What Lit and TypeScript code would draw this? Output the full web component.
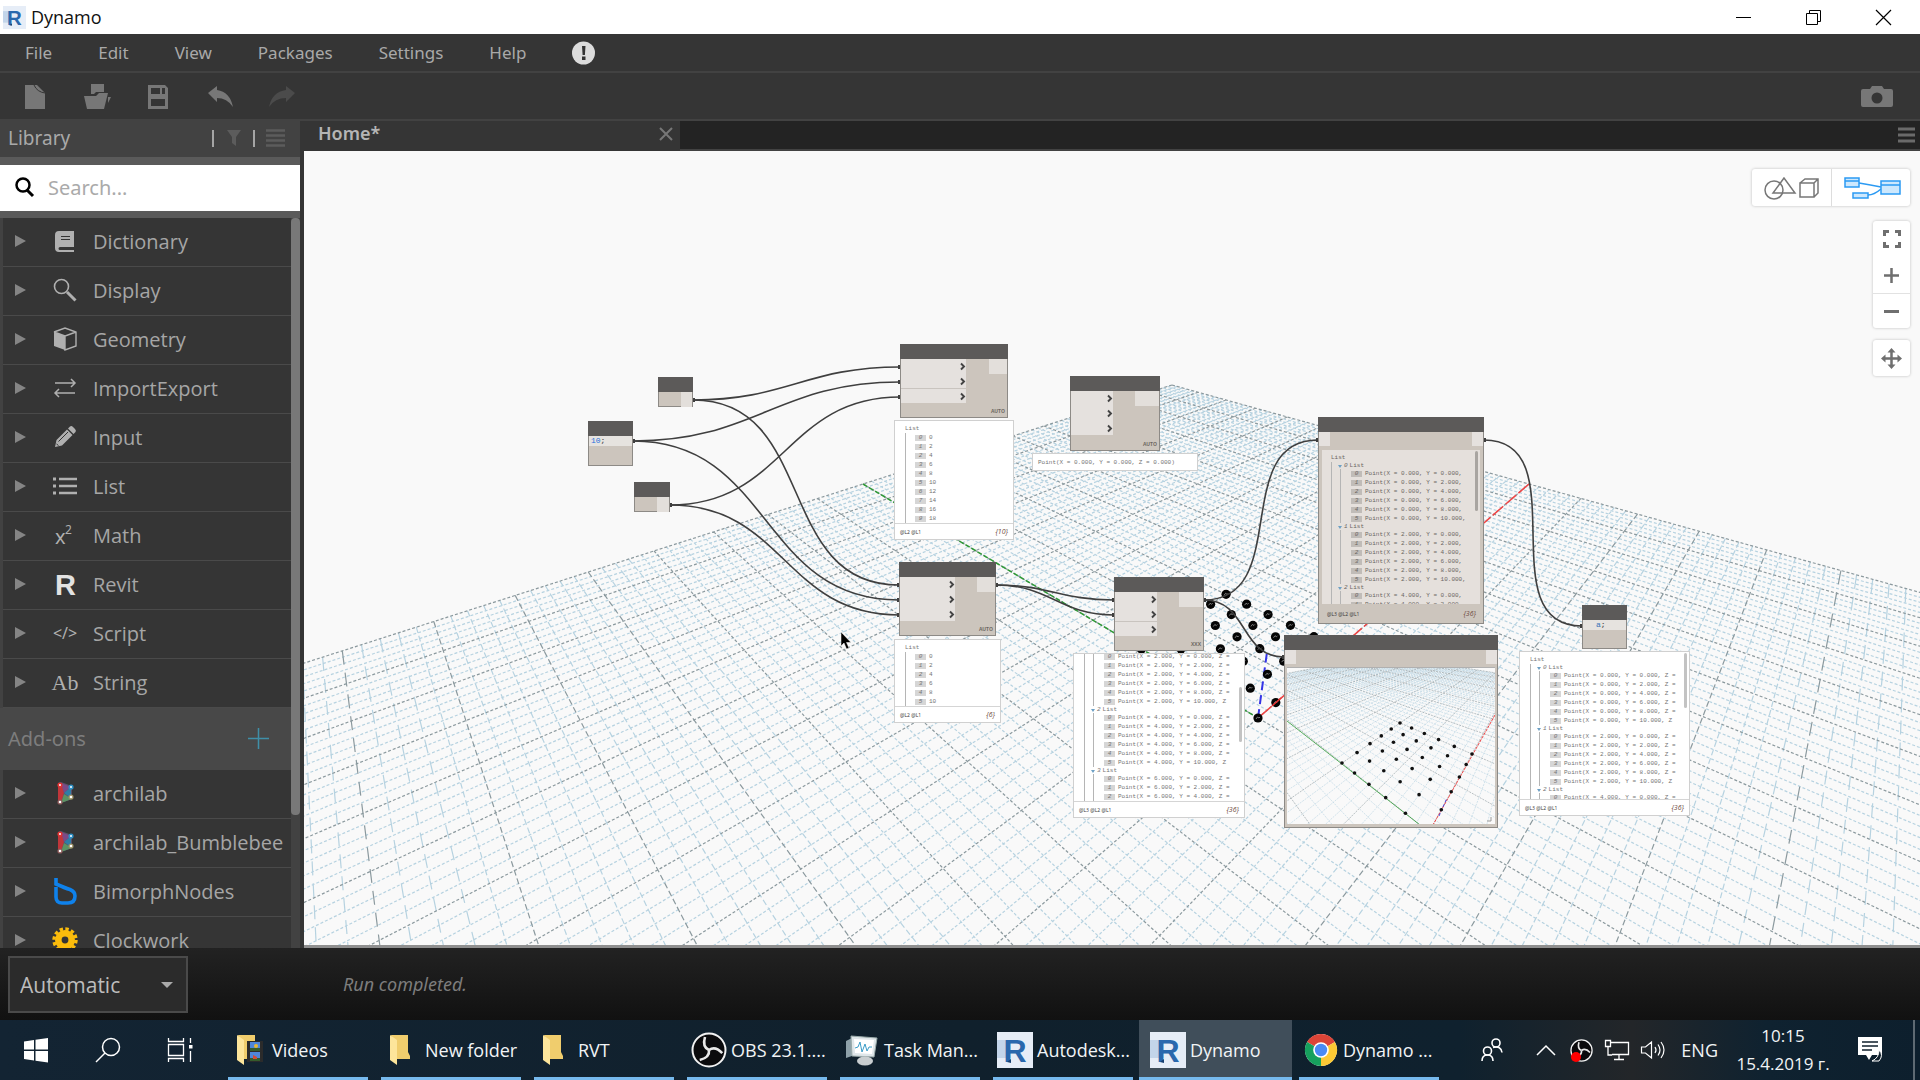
import { LitElement, html, svg, css, nothing } from "lit";
import { customElement } from "lit/decorators.js";
import { classMap } from "lit/directives/class-map.js";

type Pt = [number, number];

/** Perspective map of the unit square (origin, +X, +Y, both) to four screen points. */
function perspective(o: Pt, px: Pt, py: Pt, pxy: Pt) {
  const dx1 = px[0] - pxy[0], dx2 = py[0] - pxy[0], sx = o[0] - px[0] + pxy[0] - py[0];
  const dy1 = px[1] - pxy[1], dy2 = py[1] - pxy[1], sy = o[1] - px[1] + pxy[1] - py[1];
  const det = dx1 * dy2 - dx2 * dy1;
  const g = (sx * dy2 - dx2 * sy) / det;
  const h = (dx1 * sy - sx * dy1) / det;
  const a = px[0] - o[0] + g * px[0], b = py[0] - o[0] + h * py[0];
  const d = px[1] - o[1] + g * px[1], e = py[1] - o[1] + h * py[1];
  const w = (u: number, v: number) => g * u + h * v + 1;
  const at = (u: number, v: number): Pt => [
    (a * u + b * v + o[0]) / w(u, v),
    (d * u + e * v + o[1]) / w(u, v),
  ];
  return { g, h, w, at };
}

type Plane = ReturnType<typeof perspective>;

/** Ground grid lines from -ext to ext, keyed by class; every fifth one is a major line. */
function gridPaths(p: Plane, ext: number, near: number) {
  const out: Record<string, string> = {};
  for (const weight of ["minor", "major"])
    for (const dash of ["flat", "mid", "steep"]) out[`${weight} ${dash}`] = "";
  for (let i = -50; i <= 50; i++) {
    const k = (i / 50) * ext;
    for (const alongU of [true, false]) {
      const slope = alongU ? p.g : p.h;
      const base = 1 + (alongU ? p.h : p.g) * k;
      let start = -ext;
      if (base + slope * start < near) start = (near - base) / slope;
      if (start >= ext) continue;
      const A = alongU ? p.at(start, k) : p.at(k, start);
      const B = alongU ? p.at(ext, k) : p.at(k, ext);
      const s = Math.abs((B[1] - A[1]) / (B[0] - A[0]));
      const dash = s < 1.2 ? "flat" : s < 4 ? "mid" : "steep";
      out[`${i % 5 === 0 ? "major" : "minor"} ${dash}`] +=
        `M${B[0].toFixed(1)} ${B[1].toFixed(1)}L${A[0].toFixed(1)} ${A[1].toFixed(1)}`;
    }
  }
  return Object.entries(out);
}

const ground = perspective([1258, 718], [1529, 484], [863, 484], [1172, 385]);
const groundGrid = gridPaths(ground, 1, 0.2);
const scenePoints: Pt[] = [];
for (let i = 0; i <= 5; i++) for (let j = 0; j <= 5; j++) scenePoints.push(ground.at(i * 0.04, j * 0.04));

const preview = perspective([142, 164], [185, 86], [55, 95], [113, 55]);
const previewGrid = gridPaths(preview, 5, 0.3);
const previewPoints: Pt[] = [];
for (let i = 0; i <= 5; i++)
  for (let j = 0; j <= 5; j++) if (i + j > 0) previewPoints.push(preview.at(i * 0.2, j * 0.2));

/** Workspace pan: node coordinates minus this give the place in the canvas. */
const PAN = { x: 304, y: 151 };
const place = (x: number, y: number, w: number, h: number) =>
  `left:${x - PAN.x}px;top:${y - PAN.y}px;width:${w}px;height:${h}px`;

const wires: [number, number, number, number][] = [
  [693, 400, 900, 367], [693, 400, 899, 585],
  [633, 441, 900, 382], [633, 441, 899, 600],
  [670, 505, 900, 397], [670, 505, 899, 615],
  [996, 585, 1114, 600], [996, 585, 1114, 615],
  [1204, 600, 1318, 440], [1204, 600, 1284, 657],
  [1484, 440, 1582, 626],
];

interface NodeSpec {
  x: number; y: number; w: number; h: number;
  inW?: number; ins?: number; outW?: number; lacing?: string; code?: string; split?: boolean;
}
const nodes: NodeSpec[] = [
  { x: 658, y: 377, w: 35, h: 30, outW: 11 },
  { x: 588, y: 421, w: 45, h: 45, code: "10;" },
  { x: 634, y: 482, w: 36, h: 30, outW: 12 },
  { x: 900, y: 344, w: 108, h: 74, inW: 65, ins: 3, outW: 18, lacing: "AUTO", split: true },
  { x: 899, y: 562, w: 97, h: 74, inW: 55, ins: 3, outW: 18, lacing: "AUTO" },
  { x: 1070, y: 376, w: 90, h: 75, inW: 42, ins: 3, outW: 24, lacing: "AUTO" },
  { x: 1114, y: 577, w: 90, h: 74, inW: 42, ins: 3, outW: 24, lacing: "XXX", split: true },
  { x: 1582, y: 605, w: 45, h: 44, code: "a;" },
];

const glyph = {
  dictionary: svg`<path fill="currentColor" fill-rule="evenodd" d="M6 2h15v16H7a1.500 1.500 0 0 0 0 3h14v2H6a4 4 0 0 1-4-4V6a4 4 0 0 1 4-4zM8 7v1h9V7zM8 10v1h9v-1z"/>`,
  display: svg`<circle cx="8.500" cy="8.500" r="7" fill="none" stroke="currentColor" stroke-width="1.600"/><path d="M14 14l8.500 8.500" stroke="currentColor" stroke-width="3"/>`,
  geometry: svg`<path d="M1 5l11 4v14L1 19z" fill="currentColor"/><path d="M1 5l11-4 11 4v14l-11 4V9l11-4M1 5l11 4" fill="none" stroke="currentColor" stroke-width="1.400"/>`,
  importexport: svg`<path d="M2 7h20M18 3l4 4-4 4M22 17H2M6 13l-4 4 4 4" fill="none" stroke="currentColor" stroke-width="1.500"/>`,
  input: svg`<path d="M2 22l1.500-7L14 4.500l5.500 5.500L9 20.500zM15 3.500l2-2q1.500-1 3 .5l2 2q1.500 1.500.5 3l-2 2z" fill="currentColor"/><path d="M5.500 16.500L15 7M3.500 19l2 1.500" stroke="#353535"/>`,
  list: svg`<path d="M6 5h18M6 12h18M6 19h18" stroke="currentColor" stroke-width="2.600"/><path d="M0 5h3M0 12h3M0 19h3" stroke="currentColor" stroke-width="3"/>`,
  math: svg`<text x="2" y="21" class="g-math">x</text><text x="12" y="11" class="g-sup">2</text>`,
  revit: svg`<text x="2" y="23" class="g-revit">R</text>`,
  script: svg`<text x="12" y="18" class="g-script" text-anchor="middle">&lt;/&gt;</text>`,
  string: svg`<text x="12" y="20" class="g-string" text-anchor="middle">Ab</text>`,
  archilab: svg`<path d="M5 3q0-2 3-2l11 4v13L8 22q-3 0-3-2z" fill="#5a5068"/><path d="M5 2h4l2 10-3 10H5z" fill="#c0363a"/><path d="M8 2l10 4-7 6z" fill="#7b4a86"/><path d="M18 6v11l-7-5z" fill="#2f7ea6"/><path d="M8 22l3-9 8 5z" fill="#5c9263"/><circle cx="7" cy="4" r="2.600" fill="#d33"/><circle cx="18" cy="6" r="2.600" fill="#2d8fc4"/><circle cx="18" cy="16" r="2.600" fill="#9a8f62"/><circle cx="7" cy="21" r="2.600" fill="#8d5a5a"/><g fill="#fff"><circle cx="7" cy="4" r="1"/><circle cx="18" cy="6" r="1"/><circle cx="18" cy="16" r="1.300"/><circle cx="7" cy="21" r="1.300"/></g>`,
  bimorph: svg`<path d="M3-1v6q9 4 14 5.500 5 2 5 6.500 0 7-7 7H9q-6 0-6-6V8" fill="none" stroke="#0f82ec" stroke-width="3.600"/>`,
  clockwork: svg`<circle cx="12" cy="12" r="10" fill="#fbbc0c"/><circle cx="12" cy="12" r="11" fill="none" stroke="#fbbc0c" stroke-width="3.400" stroke-dasharray="3.400 2.360"/><circle cx="12" cy="12" r="3.400" fill="#353535"/>`,
};

const library: [keyof typeof glyph, string][] = [
  ["dictionary", "Dictionary"], ["display", "Display"], ["geometry", "Geometry"],
  ["importexport", "ImportExport"], ["input", "Input"], ["list", "List"], ["math", "Math"],
  ["revit", "Revit"], ["script", "Script"], ["string", "String"],
];
const addons: [keyof typeof glyph, string][] = [
  ["archilab", "archilab"], ["archilab", "archilab_Bumblebee"],
  ["bimorph", "BimorphNodes"], ["clockwork", "Clockwork"],
];

const folder = svg`<path d="M6 3h17v17l2 4v3H12z" fill="#f0cd6d"/><path d="M5 3l7 5v25l-7-5z" fill="#fde59b"/>`;
const revitLogo = svg`<rect width="36" height="36" fill="#e6edf7"/><path d="M0 8h14v18H0z" fill="#c3d5ea"/><text x="18" y="30" text-anchor="middle" class="g-logo" fill="#2a68ad">R</text><path d="M10 30l4-3v4z" fill="#173f70"/>`;
const blade = svg`<path d="M18 18Q11 15 14 5"/>`;
const obs = svg`<circle cx="18" cy="18" r="16.500" fill="#0b0b0d" stroke="#f2f2f2" stroke-width="2"/><g fill="none" stroke="#e8e8e8" stroke-width="2.600">${blade}<g transform="rotate(120 18 18)">${blade}</g><g transform="rotate(240 18 18)">${blade}</g></g>`;
const chrome = svg`<circle cx="18" cy="18" r="16" fill="#fff"/><path d="M18 18L4.100 10A16 16 0 0 1 31.900 10z" fill="#db4437"/><path d="M18 18L31.900 10A16 16 0 0 1 18 34z" fill="#fcc934"/><path d="M18 18L18 34A16 16 0 0 1 4.100 10z" fill="#16a05d"/><circle cx="18" cy="18" r="7.800" fill="#fff"/><circle cx="18" cy="18" r="6.200" fill="#4a8af4"/>`;
const tasks = svg`<path d="M2 9l6-3v18l-6 2z" fill="#8ea1a9"/><path d="M7 4l26 2-3 19-22-1z" fill="#dfe6e9" stroke="#9aa"/><path d="M10 7l20 1-2 14-17-1z" fill="#fff"/><path d="M11 16l3-1 2-5 2 10 3-8 2 7 2-4h3" fill="none" stroke="#3a9cc8"/><ellipse cx="21" cy="29" rx="8" ry="4.500" fill="#c9ced0"/>`;
const videos = svg`${folder}<rect x="15" y="9" width="16" height="21" fill="#2b2b2b"/><path d="M18 10h10v9H18zM18 20h10v9H18z" fill="#4f86d8"/><path d="M18 16h10v3H18zM18 26h10v3H18z" fill="#355c2c"/><circle cx="24" cy="14" r="2" fill="#e9b72f"/><path d="M21 23l4 2v2h-4z" fill="#d34b36"/>`;

const windowsList: { icon: unknown; label: string; active?: boolean }[] = [
  { icon: videos, label: "Videos" }, { icon: folder, label: "New folder" }, { icon: folder, label: "RVT" },
  { icon: obs, label: "OBS 23.1...." }, { icon: tasks, label: "Task Man..." },
  { icon: revitLogo, label: "Autodesk..." }, { icon: revitLogo, label: "Dynamo", active: true },
  { icon: chrome, label: "Dynamo ..." },
];

const ic = (content: unknown, w: number, h = w, cls = "") =>
  html`<svg class=${"ic " + cls} width=${w} height=${h} viewBox="0 0 ${w} ${h}" aria-hidden="true">${content}</svg>`;

@customElement("app-root")
export class AppRoot extends LitElement {
  static styles = css`
    :host { display: flex; flex-direction: column; min-height: 100vh; background: #353535;
      font-family: "Noto Sans", "Open Sans", sans-serif; color: #a9a9a9; }
    * { box-sizing: border-box; }
    button { font: inherit; color: inherit; background: none; border: 0; padding: 0; margin: 0; }
    .ic { display: block; flex: none; overflow: visible; }
    .titlebar { display: flex; align-items: center; height: 34px; background: #fff; color: #111; padding: 0 2px 0 3px; font: 18px "Open Sans", sans-serif; }
    .titlebar .name { flex: 1; padding-left: 5px; }
    .titlebar .wb { width: 70px; height: 34px; display: grid; place-items: center; }
    .menubar { display: flex; align-items: center; gap: 46px; height: 39px; padding-left: 25px; border-bottom: 2px solid #424242; font-size: 17px; }
    .toolbar { display: flex; align-items: center; height: 48px; color: #777; border-bottom: 2px solid #424242; padding: 2px 27px 0 20px; }
    .toolbar .camera { margin-left: auto; }
    .toolbar .tool { width: 62px; display: flex; }
    .dim { color: #4b4b4b; }
    .middle { display: flex; height: 827px; flex: 1 0 auto; }
    .side { width: 304px; flex: none; border-right: 4px solid #353535; background: #424242; display: flex; flex-direction: column; }
    .side-head { height: 36px; display: flex; align-items: center; gap: 11px; padding: 0 14px 2px 8px; font-size: 19px; }
    .side-head h2 { font: inherit; margin: 0; flex: 1; }
    .bar { width: 2px; height: 17px; background: #a5a5a5; }
    .search { height: 61px; border: solid #5a5a5a; border-width: 8px 0 7px; background: #fff; display: flex; align-items: center; gap: 13px; padding: 0 0 2px 15px; color: #000; }
    .search input { flex: 1; min-width: 0; border: 0; outline: 0; background: none; font: 20px "Noto Sans", sans-serif; color: #222; padding: 0; }
    .search input::placeholder { color: #aaa; opacity: 1; }
    .tree { flex: 1 1 0; min-height: 0; display: flex; overflow: hidden; }
    .items { flex: 1; min-width: 0; height: 0; }
    .item { display: flex; align-items: center; width: 288px; height: 49px; margin-left: 3px; padding: 0 0 2px 12px; background: #353535; border-bottom: 1px solid #4a4a4a; font: 20px "Open Sans", sans-serif; text-align: left; color: #a6a6a6; white-space: nowrap; }
    .item .arrow { margin-right: 27px; color: #858585; }
    .item .ic + .ic { margin-right: 16px; color: #b0b0b0; }
    .addons { display: flex; align-items: center; justify-content: space-between; height: 62px; padding: 0 22px 2px 8px; background: #484848; color: #7d7d7d; font-size: 20px; }
    .addons h3 { font: inherit; margin: 0; }
    .thumb { width: 9px; height: 597px; border-radius: 4px; background: #787878; flex: none; }
    .g-math { font: 20px "Noto Sans", sans-serif; fill: currentColor; }
    .g-sup { font: 12px "Noto Sans", sans-serif; fill: currentColor; }
    .g-revit { font: bold 29px "Liberation Sans", sans-serif; fill: #e2e2e2; }
    .g-script { font: 16px "Noto Sans", sans-serif; fill: currentColor; }
    .g-string { font: 22px "Liberation Serif", serif; fill: currentColor; }
    .g-logo { font: bold 32px "Liberation Sans", sans-serif; }
    .main { flex: 1; min-width: 0; display: flex; flex-direction: column; }
    .tabs { display: flex; height: 30px; background: #232323; border-bottom: 2px solid #424242; color: #6e6e6e; }
    .tab { width: 376px; margin-bottom: -2px; background: #353535; color: #b5b5b5; display: flex; align-items: center; justify-content: space-between; padding: 0 7px 4px 14px; font-size: 18px; font-weight: 600; }
    .tab span { padding-bottom: 2px; }
    .tabs .more { margin: 0 5px 0 auto; }
    .canvas { position: relative; flex: 1; background: #f9f9f9; border-bottom: 3px solid #8f8f8f; overflow: hidden; }
    .scene { position: absolute; inset: 0; width: 100%; height: 100%; }
    .minor { stroke: #b6d2e0; fill: none; stroke-width: 1.2; }
    .major { stroke: #8b999e; fill: none; stroke-width: 1.2; }
    .flat { stroke-dasharray: 3 2; }
    .mid { stroke-dasharray: 6 3; }
    .steep { stroke-dasharray: 14 8; }
    .wire { fill: none; stroke: #3f3f3f; stroke-width: 1.6; }
    .node { position: absolute; background: #ccc5bd; border: 1px solid #8d8a86; border-top: 0; display: flex; flex-direction: column; }
    .node .hd { height: 15px; flex: none; background: #5c5a59; margin: 0 -1px; }
    .ports { display: flex; justify-content: space-between; flex: 1; }
    .ins { background: #e5e1de; height: 44px; display: flex; flex-direction: column; align-items: flex-end; color: #444; }
    .ins .ic { margin: 4px 0; height: 7px; }
    .divide { background: linear-gradient(#c9c4bf, #c9c4bf) 0 29px / 100% 1px no-repeat #e5e1de; }
    .out { background: #e3dfdb; height: 15px; margin-left: auto; }
    .lacing { position: absolute; right: 2px; bottom: 2px; font: bold 5px/8px "Open Sans", sans-serif; color: #6e6963; }
    .code { height: 10px; background: #e6e3df; font: 8px/10px "Liberation Mono", monospace; color: #2670dd; padding-left: 2px; }
    .code.right { padding-left: 13px; color: #3b74b8; }
    .code b { color: #555; }
    .bubble { position: absolute; background: #fff; border: 1px solid #d0d0d0; display: flex; flex-direction: column; font: 6px/9px "Liberation Mono", monospace; color: #747474; white-space: nowrap; overflow: hidden; }
    .point { padding: 4px 5px; }
    .body { flex: 1 1 0; min-height: 0; overflow: hidden; position: relative; padding: 4px 0 0 10px; }
    .body.scrolled { padding-top: 0; }
    .scrolled .tree-line { margin-top: -2px; }
    .root { height: 8px; line-height: 8px; }
    .tree-line { border-left: 1px solid #b5b5b5; padding-left: 7px; }
    .tree-line.simple { padding-left: 9px; }
    .group { border-left: 1px solid transparent; }
    .gh { height: 7px; line-height: 7px; display: flex; align-items: center; gap: 2px; margin-left: -2px; }
    .rows { border-left: 1px solid #b5b5b5; padding-left: 10px; }
    .row { display: flex; align-items: center; gap: 3px; height: 9px; }
    .row i { width: 11px; height: 6px; background: #d6d6d6; line-height: 6px; text-align: center; flex: none; }
    .foot { height: 16px; flex: none; border-top: 1px solid #d5d5d5; display: flex; justify-content: space-between; align-items: center; padding: 0 5px; font: 5px/8px "Open Sans", sans-serif; color: #333; }
    .foot em { font-size: 7px; color: #6e4a42; }
    .scroll { position: absolute; right: 2px; width: 3px; border-radius: 2px; background: #c3c3c3; }
    .io { display: flex; justify-content: space-between; height: 14px; flex: none; }
    .io span { width: 11px; background: #e5e1de; }
    .panel { margin: 4px 3px 0; background: #e5e0dc; flex: 1 1 0; min-height: 0; overflow: hidden; display: flex; position: relative; }
    .watch { font: 6px/9px "Liberation Mono", monospace; color: #6b6662; white-space: nowrap; }
    .watch .row i { background: #c0bcb8; }
    .watch .body { padding-left: 9px; }
    .watch .scroll { background: #a9a5a1; }
    .watch .foot { border: 0; height: 19px; padding: 0 7px 0 8px; }
    .view { flex: 1; margin: 3px 2px; background: #f9f9f9; overflow: hidden; min-height: 0; border-top: 1px solid #b0b0b0; }
    .view svg { display: block; width: 100%; height: 100%; }
    .view .minor, .view .major { stroke-width: .6; stroke-dasharray: 2 1; }
    .fab { position: absolute; right: 10px; background: #fff; border-radius: 3px; box-shadow: 0 0 3px #bbb; display: flex; color: #6f6f6f; }
    .fab button { display: grid; place-items: center; }
    .modes { top: 18px; height: 37px; }
    .modes button { width: 79px; }
    .modes button + button { border-left: 1px solid #ddd; }
    .zoom { top: 70px; flex-direction: column; }
    .zoom button, .pan button { width: 37px; height: 36px; }
    .zoom button:last-child { border-top: 1px solid #e2e2e2; height: 35px; }
    .pan { top: 189px; }
    .cursor { position: absolute; }
    .runbar { height: 72px; flex: none; display: flex; align-items: center; background: linear-gradient(#222, #111); padding-left: 8px; font-size: 18px; }
    .run { position: relative; width: 180px; }
    .run select { width: 100%; height: 57px; appearance: none; background: #2b2b2b; border: 2px solid #4a4a4a; border-radius: 0; color: #bdbdbd; font: 21px "Open Sans", sans-serif; padding: 2px 10px 0; }
    .run .ic { position: absolute; right: 15px; top: 26px; pointer-events: none; }
    .run-state { margin-left: 155px; font-style: italic; color: #7d7d7d; font-size: 18px; }
    .hidden { position: absolute; width: 1px; height: 1px; overflow: hidden; clip-path: inset(50%); }
    .taskbar { height: 60px; flex: none; display: flex; background: linear-gradient(90deg, #132433, #10202c 50%, #0f212e 76%, #232629 85%, #0f2230 92%, #0d1f2d); color: #f1f4f6; font: 18px "Open Sans", sans-serif; }
    .sys { width: 72px; display: grid; place-items: center; }
    .sys-group { display: flex; margin-right: 5px; }
    .win { width: 153px; padding: 0 11px; display: flex; align-items: center; gap: 4px; white-space: nowrap; background: linear-gradient(#76b9ed, #76b9ed) 50% 100% / 140px 3px no-repeat; }
    .win.active { background: linear-gradient(#76b9ed, #76b9ed) 50% 100% / 100% 3px no-repeat #404e5a; }
    .tray { margin-left: auto; display: flex; align-items: center; }
    .tray > * { flex: none; }
    .tray .people { margin-right: 34px; }
    .tray .up { margin-right: 14px; }
    .tray .rec { margin-right: 12px; }
    .tray .net { margin-right: 12px; }
    .tray .snd { margin-right: 16px; }
    .clock { width: 114px; margin: 0 10px 0 8px; text-align: center; line-height: 28px; font-size: 17px; white-space: nowrap; }
    .note { margin: 0 29px 0 8px; }
    .edge { align-self: stretch; width: 7px; border-left: 2px solid #5e6a73; }
  `;

  private row(i: number, text: string | number) {
    return html`<div class="row"><i>${i}</i><span>${text}</span></div>`;
  }

  private group(g: number, width: "long" | "short", count = 6, header = true) {
    const rows = Array.from({ length: count }, (_, i) => {
      const tail = width === "short" ? "," : i === 5 ? ", Z" : ", Z =";
      return this.row(i, `Point(X = ${g * 2}.000, Y = ${i * 2}.000${tail}`);
    });
    return html`<div class="group">
      ${header ? html`<div class="gh">${ic(svg`<path d="M0 1h4l-2 3z" fill="#6da0c4"/>`, 4)}<i>${g}</i><span>List</span></div>` : nothing}
      <div class="rows">${rows}</div></div>`;
  }

  private foot(levels: string, n: number) {
    return html`<div class="foot"><span>${levels}</span><em>{${n}}</em></div>`;
  }

  private flatList(x: number, y: number, w: number, h: number, n: number) {
    return html`<section class="bubble" style=${place(x, y, w, h)}>
      <div class="body"><div class="root">List</div>
      <div class="tree-line simple">${Array.from({ length: n }, (_, i) => this.row(i, i * 2))}</div></div>
      ${this.foot("@L2 @L1", n)}</section>`;
  }

  private node(n: NodeSpec) {
    return html`<article class="node" style=${place(n.x, n.y, n.w, n.h)}>
      <div class="hd"></div>
      ${n.code
        ? html`<div class=${classMap({ code: true, right: n.code === "a;" })}>${n.code.slice(0, -1)}<b>;</b></div>`
        : html`<div class="ports">
            ${n.ins
              ? html`<div class=${classMap({ ins: true, divide: !!n.split })} style="width:${n.inW}px">
                  ${Array.from({ length: n.ins }, () => ic(svg`<path d="M0 .5l3 3-3 3" fill="none" stroke="#444" stroke-width="1.900"/>`, 5, 7))}</div>`
              : nothing}
            <div class="out" style="width:${n.outW}px"></div></div>`}
      ${n.lacing ? html`<span class="lacing">${n.lacing}</span>` : nothing}
    </article>`;
  }

  private scene() {
    const o = ground.at(0, 0);
    return html`<svg class="scene" aria-hidden="true"><g transform="translate(${-PAN.x} ${-PAN.y})">
      ${svg`
      ${groundGrid.map(([cls, d]) => svg`<path class=${cls} d=${d}/>`)}
      <path d="M863 484L${o[0]} ${o[1]}" stroke="#2f9a36" stroke-width="1.500" stroke-dasharray="5 2"/>
      <path d="M1529 484L${o[0]} ${o[1]}" stroke="#f04545" stroke-width="1.500" stroke-dasharray="14 3"/>
      <path d="M${o[0]} ${o[1]}L1267 652" stroke="#3434e6" stroke-width="2" stroke-dasharray="9 5"/>
      ${scenePoints.map(([x, y]) => svg`<circle cx=${x} cy=${y} r="4.600" fill="#050505"/><path d="M${x - 2} ${y + 1}l1.500-2 1.500 1 1-1" stroke="#999" stroke-width=".8" fill="none"/>`)}
      <path d="M1272 706l9-8" stroke="#e33" stroke-width="1.500"/>
      ${wires.map(([a, b, c, d]) => {
        const k = Math.hypot(c - a, d - b) * 0.45;
        return svg`<path class="wire" d="M${a} ${b}C${a + k} ${b} ${c - k} ${d} ${c} ${d}"/><path d="M${a - 1} ${b - 2}h3v4h-3zM${c - 2} ${d - 2}h2v4h-2z" fill="#3f3f3f"/>`;
      })}`}
    </g></svg>`;
  }

  private preview3d() {
    return html`<article class="node" style=${place(1284, 635, 214, 193)}>
      <div class="hd"></div><div class="io"><span></span><span></span></div>
      <div class="view"><svg viewBox="0 0 208 157" preserveAspectRatio="xMidYMin slice" aria-hidden="true">
        ${svg`${previewGrid.map(([cls, d]) => svg`<path class=${cls} d=${d}/>`)}
        <path d="M0 53L142 164" stroke="#2f9a36" stroke-width=".8"/>
        <path d="M208 47L142 164" stroke="#f04545" stroke-width="1" stroke-dasharray="3 1"/>
        <path d="M152 148l8-18" stroke="#4a4ae0" stroke-dasharray="3 2"/>
        ${previewPoints.map(([x, y]) => svg`<circle cx=${x} cy=${y} r="1.800" fill="#111"/>`)}
        <path d="M204 149v4h-4" stroke="#999" fill="none"/>`}
      </svg></div></article>`;
  }

  private canvas() {
    return html`<div class="canvas">
      ${this.scene()}
      ${nodes.map((n) => this.node(n))}
      ${this.flatList(894, 420, 120, 120, 10)}
      ${this.flatList(894, 639, 107, 84, 6)}
      <section class="bubble point" style=${place(1032, 453, 166, 18)}>Point(X = 0.000, Y = 0.000, Z = 0.000)</section>
      <section class="bubble" style=${place(1073, 653, 172, 165)}>
        <div class="body scrolled"><div class="tree-line">
          ${this.group(1, "long", 6, false)}${this.group(2, "long")}${this.group(3, "long", 3)}</div>
          <div class="scroll" style="top:33px;height:55px"></div></div>
        ${this.foot("@L3 @L2 @L1", 36)}</section>
      <section class="bubble" style=${place(1519, 651, 171, 165)}>
        <div class="body"><div class="root">List</div><div class="tree-line">
          ${this.group(0, "long")}${this.group(1, "long")}${this.group(2, "long", 1)}</div>
          <div class="scroll" style="top:1px;height:55px"></div></div>
        ${this.foot("@L3 @L2 @L1", 36)}</section>
      <article class="node watch" style=${place(1318, 417, 166, 207)}>
        <div class="hd"></div><div class="io"><span></span><span></span></div>
        <div class="panel"><div class="body"><div class="root">List</div><div class="tree-line">
          ${this.group(0, "short")}${this.group(1, "short")}${this.group(2, "short", 2)}</div>
          <div class="scroll" style="top:1px;height:60px"></div></div></div>
        ${this.foot("@L3 @L2 @L1", 36)}</article>
      ${this.preview3d()}
      <div class="fab modes">
        <button aria-label="Geometry view">${ic(svg`<g fill="none" stroke="#777" stroke-width="1.500"><circle cx="10" cy="13" r="9"/><path d="M20 1L9 16h22zM36 6h14v14H36zM36 6l5-4h13v14l-4 4M50 6l4-4"/></g>`, 55, 22)}</button>
        <button aria-label="Graph view">${ic(svg`<g fill="#cde8fd" stroke="#2b9af3" stroke-width="1.500"><path fill="none" d="M15 6q12 2 22 4M24 18q6 0 13-6"/><path d="M1 1h14v9H1zM1 4h14M9 16h15v5H9zM37 4h19v13H37zM37 8h19"/></g>`, 55, 22)}</button>
      </div>
      <div class="fab zoom">
        <button aria-label="Fit">${ic(svg`<path d="M0 6V0h6v3H3v3zM12 0h6v6h-3V3h-3zM0 12v6h6v-3H3v-3zM18 12v6h-6v-3h3v-3z" fill="#6f6f6f"/>`, 18)}</button>
        <button aria-label="Zoom in">${ic(svg`<path d="M0 7.500h15M7.500 0v15" stroke="#6f6f6f" stroke-width="2.500"/>`, 15)}</button>
        <button aria-label="Zoom out">${ic(svg`<path d="M0 7.500h15" stroke="#6f6f6f" stroke-width="3"/>`, 15)}</button>
      </div>
      <div class="fab pan"><button aria-label="Pan">${ic(svg`<path d="M10.500 2v17M2 10.500h17" stroke="#6f6f6f" stroke-width="2.500"/><path d="M10.500 0l4 4.500h-8zM10.500 21l4-4.500h-8zM0 10.500l4.500-4v8zM21 10.500l-4.500-4v8z" fill="#6f6f6f"/>`, 21)}</button></div>
      <svg class="cursor" style=${place(841, 632, 12, 18)} viewBox="0 0 12 18" aria-hidden="true"><path d="M0 0v14l3-3 2.500 6 2.500-1-2.500-5.500H10z" fill="#000" stroke="#fff" stroke-width=".5"/></svg>
    </div>`;
  }

  private item([icon, label]: [keyof typeof glyph, string]) {
    return html`<button class="item">${ic(svg`<path d="M0 0l11 6-11 6z" fill="currentColor"/>`, 11, 12, "arrow")}${ic(glyph[icon], 24)}${label}</button>`;
  }

  render() {
    return html`
      <header class="titlebar">
        ${ic(svg`<g transform="scale(.64)">${revitLogo}</g>`, 23)}<span class="name">Dynamo</span>
        <button class="wb" aria-label="Minimize">${ic(svg`<path d="M0 7.500h15" stroke="#000"/>`, 15)}</button>
        <button class="wb" aria-label="Restore">${ic(svg`<path d="M.5 3.500h11v11H.5zM3.500 3.500v-3h11v11h-3" fill="none" stroke="#000"/>`, 15)}</button>
        <button class="wb" aria-label="Close">${ic(svg`<path d="M0 0l15 15M15 0L0 15" stroke="#000" stroke-width="1.200"/>`, 15)}</button>
      </header>
      <nav class="menubar">
        ${["File", "Edit", "View", "Packages", "Settings", "Help"].map((m) => html`<button>${m}</button>`)}
        <button aria-label="Notifications">${ic(svg`<circle cx="11.500" cy="12" r="11.500" fill="#dcdcdc"/><path d="M10 5h3.500l-.6 9h-2.300zM10 15.500h3.500V19H10z" fill="#333"/>`, 23, 24)}</button>
      </nav>
      <div class="toolbar">
        <div class="tool"><button aria-label="New">${ic(svg`<path d="M5 1h12l8 8v16H5z" fill="currentColor"/><path d="M14 1q3 7 11 8" stroke="#353535" fill="none"/>`, 30, 26)}</button></div>
        <div class="tool"><button aria-label="Open">${ic(svg`<path d="M9 0h13v8h-8l-2 2H9zM2 12h12l3-3h9l-4 16H5zM26 13h3l-3 6z" fill="currentColor"/>`, 30, 26)}</button></div>
        <div class="tool"><button aria-label="Save">${ic(svg`<path d="M4 1h17l3 3v21H4zM7 4v6h14V4zM7 15v7h14v-7z" fill="currentColor" fill-rule="evenodd"/><path d="M17 4v6" stroke="currentColor" stroke-width="2"/>`, 30, 26)}</button></div>
        <div class="tool"><button aria-label="Undo">${ic(svg`<path d="M2 9l9-7v4q13 2 16 17-6-9-16-9v4z" fill="currentColor"/>`, 30, 26)}</button></div>
        <div class="tool dim"><button aria-label="Redo">${ic(svg`<path d="M27 9l-9-7v4Q4 8 1 23q6-9 17-9v4z" fill="currentColor"/>`, 30, 26)}</button></div>
        <button class="camera" aria-label="Export image">${ic(svg`<path d="M0 5q0-2 2-2h7l2-3h10l2 3h7q2 0 2 2v14q0 2-2 2H2q-2 0-2-2z" fill="currentColor"/><circle cx="16" cy="12" r="5.500" fill="#353535"/>`, 32, 22)}</button>
      </div>
      <div class="middle">
        <aside class="side">
          <div class="side-head"><h2>Library</h2><span class="bar"></span>${ic(svg`<path d="M2 0h14l-5 7v9l-4-3V7z" fill="#5c5c5c"/>`, 17, 16)}<span class="bar"></span>${ic(svg`<path d="M0 1.500h19M0 6.500h19M0 11.500h19M0 16.500h19" stroke="#5c5c5c" stroke-width="2.500"/>`, 20, 18)}</div>
          <label class="search">${ic(svg`<circle cx="8" cy="8" r="6.500" fill="none" stroke="#000" stroke-width="2.500"/><path d="M12 13l6 6" stroke="#000" stroke-width="3"/>`, 20)}<input type="text" placeholder="Search..." aria-label="Search" /></label>
          <div class="tree">
            <div class="items">
              ${library.map((i) => this.item(i))}
              <div class="addons"><h3>Add-ons</h3><button aria-label="Add package">${ic(svg`<path d="M0 10.500h21M10.500 0v21" stroke="#3f8fa8" stroke-width="1.500"/>`, 21)}</button></div>
              ${addons.map((i) => this.item(i))}
            </div>
            <div class="thumb"></div>
          </div>
        </aside>
        <main class="main">
          <div class="tabs"><div class="tab"><span>Home*</span><button aria-label="Close tab">${ic(svg`<path d="M1 1l12 12M13 1L1 13" stroke="#777" stroke-width="2"/>`, 14)}</button></div>
            <button class="more" aria-label="Tabs">${ic(svg`<path d="M0 2h17M0 8h17M0 14h17" stroke="#6a6a6a" stroke-width="3"/>`, 17, 16)}</button></div>
          ${this.canvas()}
        </main>
      </div>
      <footer class="runbar">
        <label class="run"><span class="hidden">Run mode</span><select><option>Automatic</option></select>${ic(svg`<path d="M0 0h12l-6 6z" fill="#aaa"/>`, 12, 6)}</label>
        <span class="run-state">Run completed.</span>
      </footer>
      <footer class="taskbar">
        <div class="sys-group">
          <button class="sys" aria-label="Start">${ic(svg`<path d="M0 3.500l10-1.500v9.500H0zM11.500 1.800L24 0v11.500H11.500zM0 13h10v9.500L0 21zM11.500 13H24v11.500l-12.500-1.800z" fill="#fff"/>`, 24)}</button>
          <button class="sys" aria-label="Search">${ic(svg`<circle cx="15" cy="9" r="8.500" fill="none" stroke="#fff" stroke-width="1.500"/><path d="M9 15l-9 9" stroke="#fff" stroke-width="1.500"/>`, 24)}</button>
          <button class="sys" aria-label="Task view">${ic(svg`<path d="M.5 0v3.500h15V0M.5 6.500h15v11H.5zM.5 24v-3.500h15V24M22.500 0v5M22.500 13v11" fill="none" stroke="#fff" stroke-width="1.300"/><path d="M21 7h3.500v3.500H21z" fill="#fff"/>`, 24)}</button>
        </div>
        ${windowsList.map((w) => html`<button class=${classMap({ win: true, active: !!w.active })}>${ic(w.icon, 36)}<span>${w.label}</span></button>`)}
        <div class="tray">
          <button class="people" aria-label="People">${ic(svg`<g fill="none" stroke="#fff" stroke-width="1.600"><circle cx="15" cy="5" r="4"/><circle cx="6.500" cy="13" r="4"/><path d="M1 23q0-6 5.500-6t5.500 6M12 9.500q8-2 9 5"/></g>`, 22, 24)}</button>
          <button class="up" aria-label="Hidden icons">${ic(svg`<path d="M0 10l9-9 9 9" fill="none" stroke="#fff" stroke-width="1.500"/>`, 19, 11)}</button>
          <button class="rec" aria-label="OBS">${ic(svg`<g transform="scale(.64)">${obs}</g><circle cx="6" cy="18" r="5" fill="#f00"/>`, 23)}</button>
          <button class="net" aria-label="Network">${ic(svg`<path d="M6 3.500h17.500v12H7M.5 1.500h5v6h-5zM3 8v8h4M14 16v4M9 20.500h10" fill="none" stroke="#fff" stroke-width="1.300"/>`, 24, 22)}</button>
          <button class="snd" aria-label="Volume">${ic(svg`<path d="M.5 7h4l6-5v16l-6-5h-4zM14 7q2 3 0 6M17 4.500q4 5.500 0 11M20 2q6 8 0 16" fill="none" stroke="#fff" stroke-width="1.200"/>`, 24, 20)}</button>
          <span>ENG</span>
          <time class="clock">10:15<br />15.4.2019 г.</time>
          <button class="note" aria-label="Notifications">${ic(svg`<path d="M0 0h24v18h-10l-3 5-3-5H0z" fill="#fff"/><path d="M4 5h16M4 9h16M4 13h10" stroke="#10202c" stroke-width="1.500"/><path d="M21 13q5 5 0 11h-7q7-3 7-11z" fill="#10202c" stroke="#fff"/>`, 26)}</button>
          <span class="edge"></span>
        </div>
      </footer>
    `;
  }
}
